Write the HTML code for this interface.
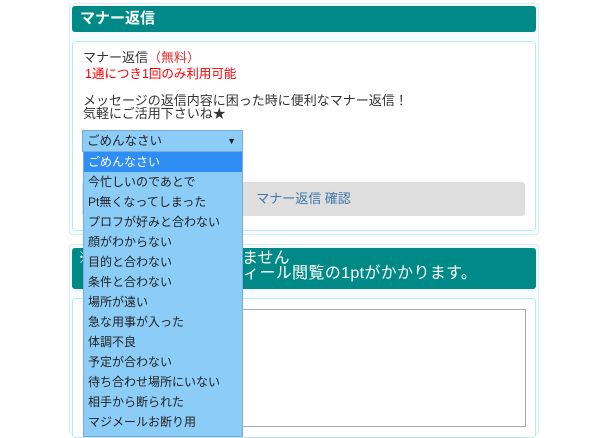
<!DOCTYPE html>
<html><head><meta charset="utf-8"><style>
*{box-sizing:border-box;margin:0;padding:0}
body{width:602px;height:431px;overflow:hidden;background:#fff;font-family:"Liberation Sans","Noto Sans CJK JP",sans-serif;font-size:12px;color:#333;position:relative}
.abs{position:absolute}
.hd{background:#008a87;color:#fff;border-radius:3px}
.wrap{border:1px solid #bfe9f1;border-radius:3px;background:#f6fcfd}
.box{background:#fff;border:1px solid #bfe9f1;border-radius:3px}
.dd div{height:20px;line-height:20px;padding-left:4px;font-size:12px;color:#222}
.w{color:#fff;font-size:16px;line-height:16px;white-space:nowrap}
</style></head><body>
<div class="abs wrap" style="left:69px;top:3px;width:470px;height:232px;border-color:#d0f0f5"></div>
<div class="abs hd" style="left:72px;top:6px;width:464px;height:26px;font-weight:bold;font-size:15px;line-height:26px;padding-left:8px">マナー返信</div>
<div class="abs box" style="left:72px;top:41px;width:464px;height:190px"></div>
<div class="abs" style="left:83px;top:49px;line-height:17px;font-size:13px">マナー返信<span style="color:#e03030">（無料）</span></div>
<div class="abs" style="left:85px;top:66px;color:#f00;font-size:12.5px;line-height:16px">1通につき1回のみ利用可能</div>
<div class="abs" style="left:83px;top:94px;line-height:13px;font-size:13px">メッセージの返信内容に困った時に便利なマナー返信！<br>気軽にご活用下さいね★</div>
<div class="abs" style="left:82px;top:182px;width:443px;height:34px;background:#dedede;border-radius:3px;color:#3d78a6;text-align:center;line-height:34px;font-size:13px">マナー返信 確認</div>
<div class="abs" style="left:69px;top:244px;width:470px;height:190px;border:1px solid #d0f0f5;border-radius:3px;background:#f6fcfd"></div>
<div class="abs hd" style="left:72px;top:248px;width:464px;height:41px"></div>
<div class="abs w" style="left:78px;top:251px">※</div>
<div class="abs w" style="left:242px;top:251px">ません</div>
<div class="abs w" style="left:243px;top:266px;letter-spacing:0.35px">ィール閲覧の1ptがかかります。</div>
<div class="abs box" style="left:72px;top:298px;width:464px;height:140px"></div>
<div class="abs" style="left:84px;top:309px;width:442px;height:118px;border:1px solid #aaa;background:#fff"></div>
<div class="abs" style="left:82px;top:130px;width:161px;height:22px;background:#8ccdf8;border:1px solid #7aa9e0;line-height:20px;padding-left:4px;font-size:12.5px;color:#222">ごめんなさい<span style="position:absolute;right:6px;font-size:9px">▼</span></div>
<div class="abs dd" style="left:83px;top:152px;width:160px;height:285px;background:#8ccdf8;border:1px solid #7aa9e0;border-top:none">
<div style="background:#2e8ef5;color:#fff">ごめんなさい</div>
<div>今忙しいのであとで</div><div>Pt無くなってしまった</div><div>プロフが好みと合わない</div><div>顔がわからない</div><div>目的と合わない</div><div>条件と合わない</div><div>場所が遠い</div><div>急な用事が入った</div><div>体調不良</div><div>予定が合わない</div><div>待ち合わせ場所にいない</div><div>相手から断られた</div><div>マジメールお断り用</div>
</div>
</body></html>
